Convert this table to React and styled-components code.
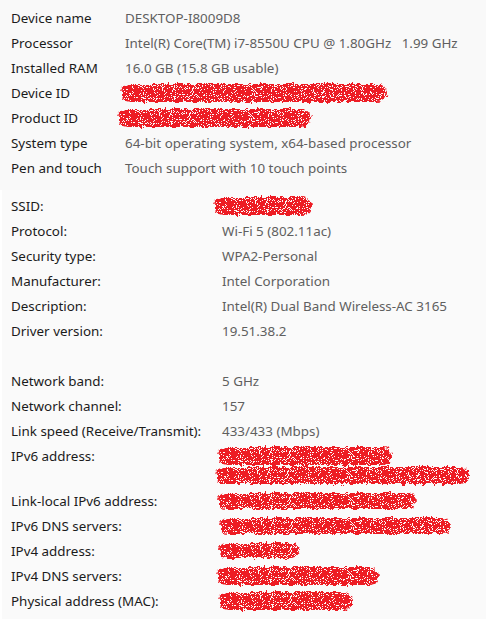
import React from "react";
import styled, { createGlobalStyle } from "styled-components";

const GlobalStyle = createGlobalStyle`
  html, body { margin: 0; padding: 0; background: #ffffff; }
  body { font-family: "Noto Sans", "Open Sans", sans-serif; -webkit-font-smoothing: antialiased; }
`;

const Page = styled.div`
  width: 486px;
  height: 619px;
  overflow: hidden;
  background: #ffffff;
  display: flex;
  flex-direction: column;
`;

const TopPanel = styled.section`
  background: #f9f9f9;
  padding: 5px 0 0 11px;
  height: 185px;
`;

const BottomPanel = styled.section`
  flex: 1;
  margin-left: 2px;
  background: #fafafa;
  padding: 3px 0 0 9px;
`;

const Row = styled.div`
  display: grid;
  grid-template-columns: ${(p) => p.$labelWidth}px 1fr;
  align-items: start;
  padding: 2.5px 0;
  min-height: 20px;
`;

const Spacer = styled.div`
  height: 25px;
`;

const Label = styled.div`
  color: #1b1b1b;
  font-size: 13.4px;
  line-height: 20px;
  white-space: nowrap;
`;

const Value = styled.div`
  color: #5f5f5f;
  font-size: 13.4px;
  line-height: 20px;
  white-space: pre;
  display: flex;
  flex-direction: column;
`;

const Line = styled.div`
  height: 20px;
  display: flex;
  align-items: center;
`;

const ScribbleSvg = styled.svg`
  display: block;
  flex: none;
  margin-left: ${(p) => p.$shift || 0}px;
  margin-top: ${(p) => p.$dy || 0}px;
`;

const Defs = styled.svg`
  display: block;
  width: 0;
  height: 0;
  overflow: hidden;
`;

function ScribbleDefs() {
  return (
    <Defs aria-hidden="true">
      <defs>
        <filter id="scribble" x="-5%" y="-20%" width="110%" height="140%" colorInterpolationFilters="sRGB">
          <feTurbulence type="fractalNoise" baseFrequency="1.1" numOctaves="2" seed="7" result="noise" />
          <feComponentTransfer in="noise" result="mask">
            <feFuncA type="discrete" tableValues="0 0 0 0 0 0 0 0 0 1 1 1 1 1 1 1 1 1 1 1 1 1 1 1" />
          </feComponentTransfer>
          <feTurbulence type="fractalNoise" baseFrequency="0.25" numOctaves="2" seed="3" result="coarse" />
          <feDisplacementMap in="SourceGraphic" in2="coarse" scale="6" xChannelSelector="R" yChannelSelector="G" result="shape" />
          <feFlood floodColor="#ed1c24" result="red" />
          <feComposite in="red" in2="mask" operator="in" result="speck" />
          <feComposite in="speck" in2="shape" operator="in" />
        </filter>
      </defs>
    </Defs>
  );
}

function Redact({ w, h = 18, shift = 0, dy = 0 }) {
  return (
    <ScribbleSvg width={w} height={h} viewBox={`0 0 ${w} ${h}`} $shift={shift} $dy={dy} aria-hidden="true">
      <rect x="2" y="2" width={w - 4} height={h - 4} rx={(h - 4) / 2} fill="#ed1c24" filter="url(#scribble)" />
    </ScribbleSvg>
  );
}

const specs = [
  { label: "Device name", value: "DESKTOP-I8009D8" },
  { label: "Processor", value: "Intel(R) Core(TM) i7-8550U CPU @ 1.80GHz   1.99 GHz" },
  { label: "Installed RAM", value: "16.0 GB (15.8 GB usable)" },
  { label: "Device ID", redact: [{ w: 270, h: 22, shift: -6 }] },
  { label: "Product ID", redact: [{ w: 197, h: 22, shift: -9 }] },
  { label: "System type", value: "64-bit operating system, x64-based processor" },
  { label: "Pen and touch", value: "Touch support with 10 touch points" },
];

const network = [
  { label: "SSID:", redact: [{ w: 102, h: 22, shift: -10 }] },
  { label: "Protocol:", value: "Wi-Fi 5 (802.11ac)" },
  { label: "Security type:", value: "WPA2-Personal" },
  { label: "Manufacturer:", value: "Intel Corporation" },
  { label: "Description:", value: "Intel(R) Dual Band Wireless-AC 3165" },
  { label: "Driver version:", value: "19.51.38.2" },
  { spacer: true },
  { label: "Network band:", value: "5 GHz" },
  { label: "Network channel:", value: "157" },
  { label: "Link speed (Receive/Transmit):", value: "433/433 (Mbps)" },
  {
    label: "IPv6 address:",
    redact: [
      { w: 178, h: 22, shift: -6, dy: 1 },
      { w: 257, h: 21, shift: -8 },
    ],
  },
  { label: "Link-local IPv6 address:", redact: [{ w: 202, h: 20, shift: -6 }] },
  { label: "IPv6 DNS servers:", redact: [{ w: 235, h: 20, shift: -4 }] },
  { label: "IPv4 address:", redact: [{ w: 84, h: 19, shift: -5 }] },
  { label: "IPv4 DNS servers:", redact: [{ w: 166, h: 22, shift: -7 }] },
  { label: "Physical address (MAC):", redact: [{ w: 138, h: 22, shift: -5 }] },
];

function InfoRow({ item, labelWidth }) {
  return (
    <Row $labelWidth={labelWidth}>
      <Label>{item.label}</Label>
      <Value>
        {item.redact
          ? item.redact.map((r, i) => (
              <Line key={i}>
                <Redact {...r} />
              </Line>
            ))
          : item.value}
      </Value>
    </Row>
  );
}

export default function App() {
  return (
    <Page>
      <GlobalStyle />
      <ScribbleDefs />
      <TopPanel>
        {specs.map((s) => (
          <InfoRow key={s.label} item={s} labelWidth={114} />
        ))}
      </TopPanel>
      <BottomPanel>
        {network.map((n, i) =>
          n.spacer ? <Spacer key={i} /> : <InfoRow key={n.label} item={n} labelWidth={211} />
        )}
      </BottomPanel>
    </Page>
  );
}
